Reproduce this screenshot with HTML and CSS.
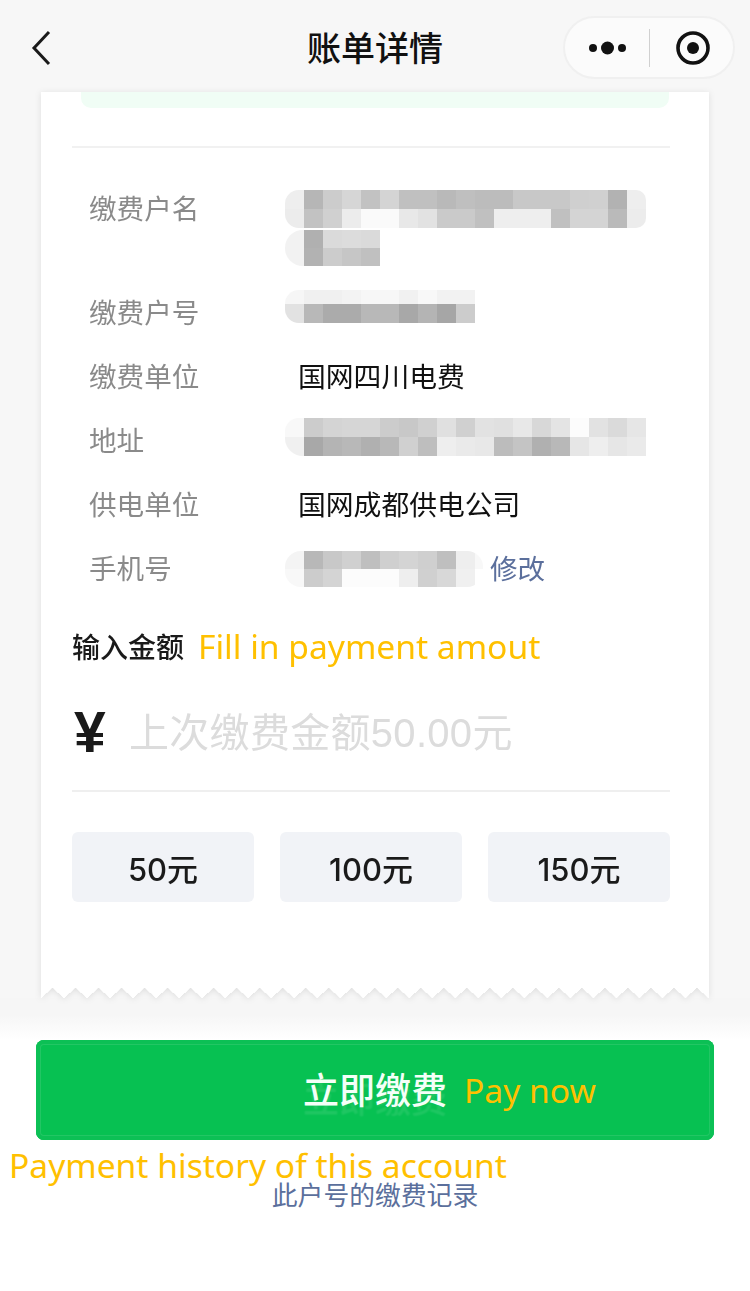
FILE: index.html
```html
<!DOCTYPE html>
<html lang="zh-CN">
<head>
  <meta charset="UTF-8">
  <meta name="viewport" content="width=device-width, initial-scale=1.0">
  <title>账单详情</title>
  <link rel="stylesheet" href="styles.css">
</head>
<body>
  <header class="nav">
    <svg class="back" width="24" height="36" viewBox="0 0 24 36">
      <path d="M21 2 L6 18 L21 34" fill="none" stroke="#1a1a1a" stroke-width="3"/>
    </svg>
    <h1 class="title">账单详情</h1>
    <div class="capsule">
      <svg class="more" width="40" height="14" viewBox="0 0 40 14">
        <circle cx="5" cy="7" r="4" fill="#111"/>
        <circle cx="19.5" cy="7" r="6.5" fill="#111"/>
        <circle cx="34" cy="7" r="4" fill="#111"/>
      </svg>
      <span class="capsule-line"></span>
      <svg class="target" width="36" height="36" viewBox="0 0 36 36">
        <circle cx="18" cy="18" r="15" fill="none" stroke="#111" stroke-width="3.6"/>
        <circle cx="18" cy="18" r="6" fill="#111"/>
      </svg>
    </div>
  </header>

  <main class="page">
    <section class="card">
      <div class="card-body">
        <div class="tip"></div>
        <hr class="line">

        <div class="rows">
          <div class="row row-tall">
            <span class="key">缴费户名</span>
            <div class="blur-stack">
              <div class="blur blur-name-a"></div>
              <div class="blur blur-name-b"></div>
            </div>
          </div>
          <div class="row">
            <span class="key">缴费户号</span>
            <div class="blur blur-account"></div>
          </div>
          <div class="row">
            <span class="key">缴费单位</span>
            <span class="val">国网四川电费</span>
          </div>
          <div class="row">
            <span class="key">地址</span>
            <div class="blur blur-address"></div>
          </div>
          <div class="row">
            <span class="key">供电单位</span>
            <span class="val">国网成都供电公司</span>
          </div>
          <div class="row">
            <span class="key">手机号</span>
            <div class="blur blur-phone"></div>
            <a class="edit">修改</a>
          </div>
        </div>

        <div class="amount-label">
          <span class="amount-title">输入金额</span>
          <span class="note">Fill in payment amout</span>
        </div>

        <div class="amount-input">
          <span class="yen">¥</span>
          <span class="placeholder">上次缴费金额50.00元</span>
        </div>

        <div class="quick">
          <button class="quick-btn">50元</button>
          <button class="quick-btn">100元</button>
          <button class="quick-btn">150元</button>
        </div>
      </div>
      <div class="zigzag"></div>
    </section>
    <div class="fade"></div>
  </main>

  <footer class="foot">
    <button class="pay">
      <span class="pay-text">立即缴费</span>
      <span class="note">Pay now</span>
    </button>
    <p class="note history-note">Payment history of this account</p>
    <a class="history">此户号的缴费记录</a>
  </footer>
</body>
</html>
```

FILE: styles.css
```css
* {
  box-sizing: border-box;
}

body {
  margin: 0;
  width: 750px;
  height: 1291px;
  overflow: hidden;
  background: #fff;
  font-family: "Noto Sans CJK SC", "Liberation Sans", sans-serif;
  color: #111;
}

/* top bar */
.nav {
  height: 92px;
  background: #f7f7f7;
  display: flex;
  align-items: center;
  justify-content: space-between;
  padding: 0 15px 0 28px;
  position: relative;
}

.back {
  display: block;
  margin-top: 4px;
}

.title {
  position: absolute;
  left: 0;
  right: 0;
  top: 24px;
  margin: 0;
  text-align: center;
  font-size: 34px;
  line-height: 46px;
  font-weight: 500;
}

.capsule {
  width: 172px;
  height: 63px;
  margin-top: 3px;
  border: 2px solid #f0f0f0;
  border-radius: 32px;
  background: #fbfbfb;
  display: flex;
  align-items: center;
  padding-left: 23px;
}

.capsule-line {
  width: 1px;
  height: 38px;
  background: #d0d0d0;
  margin: 0 25px 0 21px;
}

/* bill */
.page {
  background: #f7f7f7;
}

.card {
  margin: 0 41px;
  filter: drop-shadow(0 1px 3px rgba(0, 0, 0, 0.1));
}

.card-body {
  background: #fff;
  height: 896px;
  padding: 0 39px 0 31px;
}

.tip {
  height: 16px;
  margin: 0 1px 0 9px;
  background: #f0fdf5;
  border-radius: 0 0 10px 10px;
}

.line {
  height: 2px;
  margin: 38px 0 0;
  border: 0;
  background: #f1f1f1;
}

.rows {
  margin-top: 39px;
  display: flex;
  flex-direction: column;
  gap: 24px;
}

.row {
  display: flex;
  align-items: flex-start;
  min-height: 40px;
  padding-left: 17px;
}

.row-tall {
  height: 80px;
}

.key {
  width: 196px;
  flex-shrink: 0;
  font-size: 27.6px;
  line-height: 40px;
  color: #8a8a8a;
}

.val {
  margin-left: 13px;
  font-size: 27.8px;
  line-height: 40px;
  color: #111;
}

.edit {
  margin-left: 7px;
  font-size: 27.6px;
  line-height: 40px;
  color: #5b6f9c;
}

/* mosaic over the private values */
.blur-stack {
  display: flex;
  flex-direction: column;
  gap: 2px;
}

.blur {
  flex-shrink: 0;
  border-radius: 14px 0 0 14px;
  background-repeat: no-repeat;
}

.blur-name-a {
  width: 361px;
  height: 38px;
  margin-top: 3px;
  border-radius: 14px 10px 10px 14px;
  background-image:
    linear-gradient(90deg, #eee 19px, #b6b6b6 0 38px, #ccc 0 57px, #d6d6d6 0 76px, #c2c2c2 0 95px, #d4d4d4 0 114px, #c0c0c0 0 152px, #b9b9b9 0 171px, #bfbfbf 0 190px, #bcbcbc 0 228px, #c8c8c8 0 285px, #cfcfcf 0 304px, #d0d0d0 0 323px, #b2b2b2 0 342px, #eee 0),
    linear-gradient(90deg, #ececec 19px, #c2c2c2 0 38px, #d0d0d0 0 57px, #ececec 0 76px, #fafafa 0 114px, #e8e8e8 0 133px, #e2e2e2 0 152px, #cacaca 0 190px, #c0c0c0 0 209px, #eee 0 266px, #c0c0c0 0 285px, #d4d4d4 0 323px, #bababa 0 342px, #ececec 0);
  background-size: 100% 19px;
  background-position: 0 0, 0 19px;
}

.blur-name-b {
  width: 95px;
  height: 36px;
  border-radius: 18px 0 0 18px;
  background-image:
    linear-gradient(90deg, #f2f2f2 19px, #b0b0b0 0 38px, #dadada 0 57px, #dcdcdc 0 76px, #dadada 0),
    linear-gradient(90deg, #f2f2f2 19px, #b2b2b2 0 38px, #ccc 0 57px, #c6c6c6 0 76px, #c0c0c0 0);
  background-size: 100% 18px;
  background-position: 0 0, 0 18px;
}

.blur-account {
  width: 190px;
  height: 33px;
  margin-top: -1px;
  background-image:
    linear-gradient(90deg, #f6f6f6 19px, #f0f0f0 0 57px, #f3f3f3 0 76px, #f7f7f7 0 114px, #f1f1f1 0 133px, #f8f8f8 0 152px, #f2f2f2 0),
    linear-gradient(90deg, #e2e2e2 19px, #b8b8b8 0 38px, #ababab 0 76px, #b8b8b8 0 114px, #a8a8a8 0 133px, #b4b4b4 0 152px, #a6a6a6 0 171px, #ccc 0);
  background-size: 100% 14px, 100% 19px;
  background-position: 0 0, 0 14px;
}

.blur-address {
  width: 361px;
  height: 38px;
  margin-top: -1px;
  border-radius: 14px 0 0 18px;
  background-image:
    linear-gradient(90deg, #f8f8f8 19px, #ccc 0 38px, #d4d4d4 0 57px, #d6d6d6 0 95px, #ccc 0 114px, #c8c8c8 0 133px, #d0d0d0 0 152px, #e0e0e0 0 171px, #d0d0d0 0 190px, #e2e2e2 0 209px, #e0e0e0 0 228px, #e8e8e8 0 247px, #d8d8d8 0 266px, #e4e4e4 0 285px, #fcfcfc 0 304px, #e2e2e2 0 323px, #dadada 0 342px, #e6e6e6 0),
    linear-gradient(90deg, #f0f0f0 19px, #a8a8a8 0 38px, #b4b4b4 0 57px, #b8b8b8 0 76px, #b0b0b0 0 95px, #b8b8b8 0 114px, #d0d0d0 0 133px, #bebebe 0 152px, #eee 0 171px, #eaeaea 0 190px, #e8e8e8 0 209px, #bcbcbc 0 228px, #c4c4c4 0 247px, #b0b0b0 0 266px, #b8b8b8 0 285px, #e6e6e6 0 304px, #eee 0 323px, #e6e6e6 0 342px, #eaeaea 0);
  background-size: 100% 19px;
  background-position: 0 0, 0 19px;
}

.blur-phone {
  width: 198px;
  height: 36px;
  margin-top: 4px;
  border-radius: 16px;
  background-image:
    linear-gradient(90deg, #f4f4f4 19px, #b8b8b8 0 38px, #c8c8c8 0 57px, #d0d0d0 0 76px, #bfbfbf 0 95px, #cfcfcf 0 114px, #d4d4d4 0 133px, #cfcfcf 0 152px, #bfbfbf 0 171px, #eee 0 190px, #f8f8f8 0),
    linear-gradient(90deg, #f8f8f8 19px, #ccc 0 38px, #d4d4d4 0 57px, #fcfcfc 0 114px, #eee 0 133px, #d0d0d0 0 152px, #d8d8d8 0 171px, #f0f0f0 0 190px, #fff 0);
  background-size: 100% 18px;
  background-position: 0 0, 0 18px;
}

/* amount */
.amount-label {
  display: flex;
  align-items: center;
  height: 40px;
  margin-top: 39px;
}

.amount-title {
  font-size: 28px;
  font-weight: 500;
  color: #1a1a1a;
  margin-right: 14px;
}

.note {
  font-family: "Noto Sans", "Liberation Sans", sans-serif;
  font-size: 33.6px;
  font-weight: 400;
  color: #ffc000;
}

.amount-input {
  display: flex;
  align-items: center;
  height: 90px;
  margin-top: 36px;
  padding-bottom: 28px;
  border-bottom: 2px solid #efefef;
}

.yen {
  width: 57px;
  margin-top: -1px;
  padding-left: 2px;
  font-family: "Liberation Sans", sans-serif;
  font-size: 57px;
  font-weight: 700;
  line-height: 60px;
  color: #1a1a1a;
}

.placeholder {
  margin-top: 2px;
  font-family: "Liberation Sans", "Noto Sans CJK SC", sans-serif;
  font-size: 40px;
  line-height: 60px;
  letter-spacing: 0.3px;
  color: #dcdcdc;
}

.quick {
  display: flex;
  gap: 26px;
  margin-top: 40px;
}

.quick-btn {
  width: 182px;
  height: 70px;
  padding: 0;
  border: 0;
  border-radius: 6px;
  background: #f1f3f7;
  font-family: Inter, "Noto Sans CJK SC", sans-serif;
  font-size: 31px;
  font-weight: 500;
  color: #1a1a1a;
}

.zigzag {
  height: 10px;
  background: conic-gradient(from 131deg at 50% 0, transparent 98deg, #fff 0) 0 0 / 23.03px 10px;
}

.fade {
  height: 42px;
  background: linear-gradient(#f6f6f6 40%, #fff);
}

/* bottom */
.foot {
  display: flex;
  flex-direction: column;
  align-items: center;
}

.pay {
  width: 678px;
  height: 100px;
  padding: 0 0 0 267px;
  border: 0;
  border-radius: 8px;
  background: #07c152;
  box-shadow: inset 0 0 0 4px #0cc055, inset 0 0 0 5px #22c664;
  display: flex;
  align-items: center;
  gap: 17px;
  font-family: inherit;
}

.pay-text {
  margin-bottom: 5px;
  font-size: 36px;
  font-weight: 500;
  color: #f4fff8;
  text-shadow: 0 9px 2px rgba(255, 255, 255, 0.1);
}

.history-note {
  align-self: flex-start;
  margin: 10px 0 0 9px;
  line-height: 30px;
}

.history {
  margin-top: 1px;
  font-size: 25.8px;
  line-height: 26px;
  color: #5b6f9c;
}
```
